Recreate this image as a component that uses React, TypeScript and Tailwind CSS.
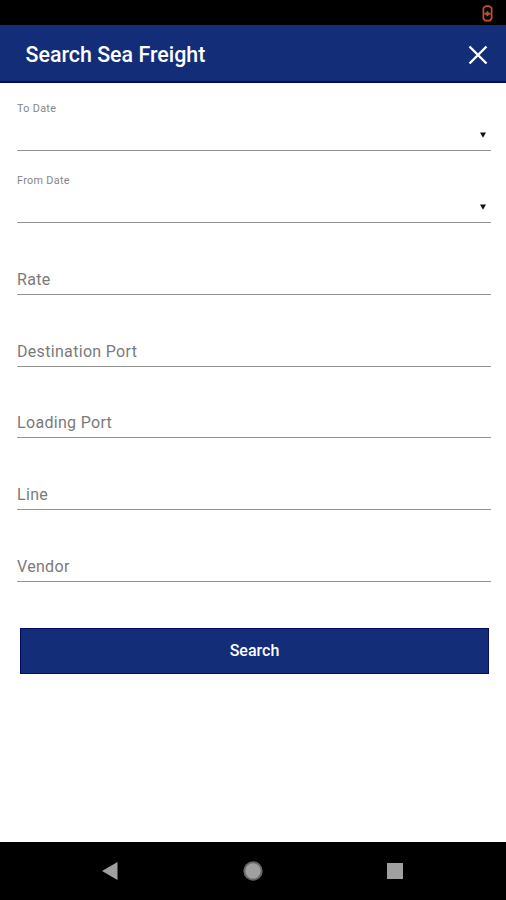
import { useState } from "react";

const DATE_FIELDS = ["To Date", "From Date"];
const TEXT_FIELDS = ["Rate", "Destination Port", "Loading Port", "Line", "Vendor"];

function StatusBar() {
  return (
    <div className="flex h-[25px] shrink-0 justify-end bg-black pr-[13px] pt-[5px]">
      <svg width="11" height="17" viewBox="0 0 11 17" fill="none" stroke="#c9502f">
        <path d="M3.8 1.2h3.4l2.4 2v10.4l-1.8 2H3.2l-1.8-2V3.2z" strokeWidth="1.7" strokeLinejoin="round" />
        <path d="M5.5 6.2v5M2.5 8.7h6" strokeWidth="1.9" />
      </svg>
    </div>
  );
}

function DateField({ label }: { label: string }) {
  return (
    <button type="button" className="flex h-[52px] w-full flex-col border-b border-[#939393] text-left">
      <span className="mt-[3px] text-[10.8px] leading-[14px] tracking-[0.33px] text-[#858585]">{label}</span>
      <span className="flex w-full justify-end pr-[5.5px] pt-4">
        <svg width="6" height="6" viewBox="0 0 6 6" fill="#111">
          <path d="M0 0.5h6L3 5.8z" />
        </svg>
      </span>
    </button>
  );
}

function TextField({ label }: { label: string }) {
  const [value, setValue] = useState("");

  return (
    <div className="flex h-[52px] items-end border-b border-[#939393] pb-[4px]">
      <input
        aria-label={label}
        placeholder={label}
        value={value}
        onChange={(e) => setValue(e.target.value)}
        className="h-5 w-full bg-transparent text-[16px] leading-5 tracking-[0.32px] text-[#333] outline-none placeholder:text-[#7a7a7a]"
      />
    </div>
  );
}

function NavigationBar() {
  return (
    <nav className="flex h-[58px] shrink-0 items-center justify-between bg-black pl-[101px] pr-[103px]">
      <svg width="18" height="20" viewBox="0 0 18 20" fill="#a0a0a0">
        <path d="M1 10 16.5 1v18z" />
      </svg>
      <svg width="20" height="20" viewBox="0 0 20 20">
        <circle cx="10" cy="10" r="9.7" fill="#666" />
        <circle cx="10" cy="10" r="7.7" fill="#a0a0a0" />
      </svg>
      <div className="size-4 bg-[#a0a0a0]" />
    </nav>
  );
}

export default function App() {
  return (
    <div className="flex h-screen w-full flex-col bg-white font-[Roboto,sans-serif]">
      <StatusBar />
      <header className="flex h-[58px] shrink-0 items-center justify-between border-b-2 border-[#080c5e] bg-[#132d78] pl-[25.5px] pr-[18px] pt-[3px]">
        <h1 className="text-[21.4px] font-medium leading-7 text-white">Search Sea Freight</h1>
        <button type="button" aria-label="Close">
          <svg width="20" height="20" viewBox="0 0 20 20" stroke="#fff" strokeWidth="2.4">
            <path d="M1.5 1.5l17 17M18.5 1.5l-17 17" />
          </svg>
        </button>
      </header>

      <main className="flex-1 pl-[17px] pr-[15px] pt-[16.2px]">
        <form className="flex flex-col" onSubmit={(e) => e.preventDefault()}>
          <div className="flex flex-col gap-[19.8px]">
            {DATE_FIELDS.map((label) => (
              <DateField key={label} label={label} />
            ))}
            {TEXT_FIELDS.map((label) => (
              <TextField key={label} label={label} />
            ))}
          </div>
          <button
            type="submit"
            className="ml-[3px] mr-[2px] mt-[46px] h-[46px] border border-[#080c5e] bg-[#132d78] text-[16px] font-medium text-white"
          >
            Search
          </button>
        </form>
      </main>

      <NavigationBar />
    </div>
  );
}
